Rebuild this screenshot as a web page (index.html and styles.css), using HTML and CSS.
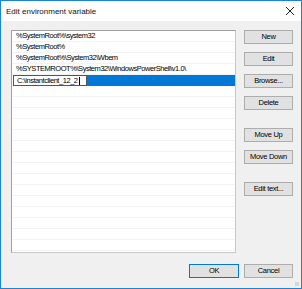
FILE: index.html
```html
<!DOCTYPE html>
<html>
<head>
<meta charset="utf-8">
<link rel="stylesheet" href="styles.css">
</head>
<body>
<div class="window">
  <div class="titlebar">
    <span class="title">Edit environment variable</span>
    <svg class="close" width="10" height="10" viewBox="0 0 10 10"><path d="M1 1L9 9M9 1L1 9" stroke="#222" stroke-width="1" fill="none"/></svg>
  </div>
  <div class="content">
    <div class="main">
      <div class="list">
        <div class="row">%SystemRoot%\system32</div>
        <div class="row">%SystemRoot%</div>
        <div class="row">%SystemRoot%\System32\Wbem</div>
        <div class="row">%SYSTEMROOT%\System32\WindowsPowerShell\v1.0\</div>
        <div class="row selected"><span class="editbox">C:\instantclient_12_2<span class="caret"></span></span><span class="hl"></span></div>
        <div class="row"></div>
        <div class="row"></div>
        <div class="row"></div>
        <div class="row"></div>
        <div class="row"></div>
        <div class="row"></div>
        <div class="row"></div>
        <div class="row"></div>
        <div class="row"></div>
        <div class="row"></div>
        <div class="row"></div>
        <div class="row"></div>
        <div class="row"></div>
        <div class="row"></div>
        <div class="row"></div>
      </div>
      <div class="side">
        <div class="group">
          <button class="btn">New</button>
          <button class="btn">Edit</button>
          <button class="btn">Browse...</button>
          <button class="btn">Delete</button>
        </div>
        <div class="group">
          <button class="btn">Move Up</button>
          <button class="btn">Move Down</button>
        </div>
        <div class="group">
          <button class="btn">Edit text...</button>
        </div>
      </div>
    </div>
    <div class="footer">
      <button class="btn default">OK</button>
      <button class="btn">Cancel</button>
    </div>
  </div>
  <div class="grip"></div>
</div>
</body>
</html>
```
FILE: styles.css
```css
html, body {
  margin: 0;
  padding: 0;
}
body {
  width: 302px;
  height: 289px;
  overflow: hidden;
  font-family: "Liberation Sans", "Noto Sans", sans-serif;
  font-size: 7.5px;
  color: #000;
}
.window {
  position: relative;
  box-sizing: border-box;
  width: 302px;
  height: 289px;
  border: 1px solid #1a84d8;
  background: #f0f0f0;
  display: flex;
  flex-direction: column;
}
.titlebar {
  height: 20px;
  background: #fff;
  display: flex;
  align-items: center;
  justify-content: space-between;
  padding: 0 6px 0 5px;
}
.title {
  font-size: 8px;
  color: #111;
}
.close {
  display: block;
}
.content {
  flex: 1;
  display: flex;
  flex-direction: column;
  padding: 9px 8px 0 10px;
}
.main {
  display: flex;
  gap: 8px;
}
.list {
  box-sizing: border-box;
  width: 225px;
  height: 223px;
  background: #fff;
  border: 1px solid #828790;
  border-color: #a0a0a0 #c8c8c8 #c8c8c8 #a0a0a0;
  overflow: hidden;
  letter-spacing: -0.45px;
}
.row {
  box-sizing: border-box;
  height: 11px;
  line-height: 10px;
  padding-left: 4px;
  border-bottom: 1px solid #f3f3f3;
  white-space: nowrap;
  display: flex;
}
.row.selected {
  padding-left: 1px;
  border-bottom: none;
}
.editbox {
  box-sizing: border-box;
  width: 74px;
  height: 11px;
  border: 1px solid #555;
  background: #fff;
  padding-left: 3px;
  line-height: 9px;
  display: flex;
  align-items: center;
}
.caret {
  display: inline-block;
  width: 1px;
  height: 8px;
  background: #000;
  margin-left: 1px;
}
.hl {
  flex: 1;
  background: #0078d7;
}
.side {
  display: flex;
  flex-direction: column;
  gap: 18px;
}
.group {
  display: flex;
  flex-direction: column;
  gap: 8px;
}
.btn {
  box-sizing: border-box;
  width: 49px;
  height: 14px;
  padding: 0;
  margin: 0;
  background: #e1e1e1;
  border: 1px solid #adadad;
  font-family: inherit;
  font-size: 7.5px;
  letter-spacing: -0.3px;
  color: #000;
  line-height: 12px;
}
.btn.default {
  border: 1px solid #0078d7;
  width: 50px;
}
.footer {
  display: flex;
  justify-content: flex-end;
  gap: 5px;
  margin-top: 11px;
}
.grip {
  position: absolute;
  right: 2px;
  bottom: 2px;
  width: 4px;
  height: 4px;
  background:
    radial-gradient(circle, #b8b8b8 0.6px, transparent 0.8px) 0 0 / 2px 2px;
}
```
